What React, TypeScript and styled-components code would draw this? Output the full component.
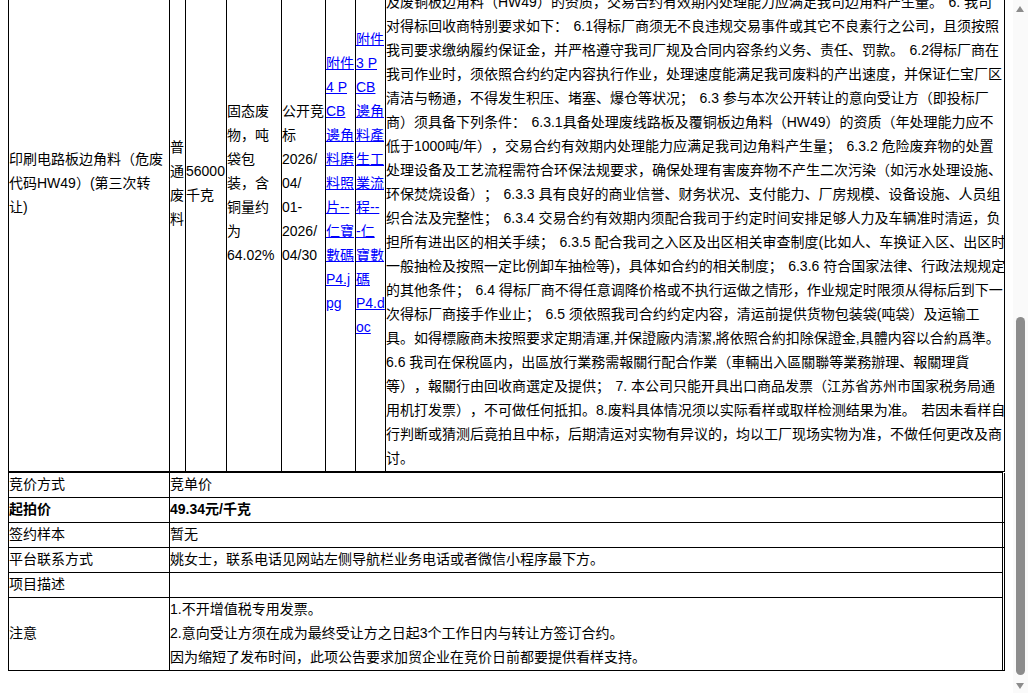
import React from 'react';
import styled, { createGlobalStyle } from 'styled-components';

const GlobalStyle = createGlobalStyle`
  html,
  body {
    margin: 0;
    height: 100%;
    overflow: hidden;
    background: #fff;
  }
  #root {
    height: 100%;
  }
`;

const Page = styled.div`
  display: flex;
  height: 693px;
  font-family: 'Liberation Sans', 'Noto Sans CJK SC', sans-serif;
  font-size: 14px;
  line-height: 24px;
  color: #000;
  text-spacing-trim: space-all;
`;

// page is scrolled to its end, so the content hangs from the bottom and its top is cut off
const Viewport = styled.div`
  flex: 1;
  min-width: 0;
  height: 100%;
  overflow: hidden;
  display: flex;
  flex-direction: column;
  justify-content: flex-end;
  padding: 0 0 22px 8px;
  box-sizing: border-box;
`;

const ItemTable = styled.table`
  flex: none;
  width: 997px;
  table-layout: fixed;
  border-collapse: collapse;
`;

const InfoTable = styled.table`
  flex: none;
  width: 997px;
  table-layout: fixed;
  border-collapse: collapse;
  border-right: 1px solid #000;
`;

const ItemRow = styled.tr`
  height: 578px;
`;

const Cell = styled.td`
  border: 1px solid #000;
  padding: 0;
  vertical-align: middle;
  overflow: hidden;
`;

const DetailCell = styled(Cell)`
  vertical-align: bottom;
  padding-bottom: 1px;
`;

const InfoRow = styled.tr<{ $bold?: boolean }>`
  font-weight: ${({ $bold }) => ($bold ? 700 : 400)};
`;

const InfoCell = styled.td`
  height: 24px;
  border: 1px solid #000;
  padding: 0;
  vertical-align: middle;
`;

const InfoText = styled.div`
  margin: -1px 0 1px;
`;

// sliver of a column at the far right, only some rows rule across it
const EdgeCell = styled.td<{ $ruled?: boolean }>`
  padding: 0;
  border-left: 1px solid #000;
  border-bottom: ${({ $ruled }) => ($ruled ? '1px solid #000' : 'none')};
`;

const Line = styled.div`
  white-space: pre;
`;

// the clause gaps are a little wider than one space
const ClauseGap = styled.span`
  display: inline-block;
  width: 5.5px;
`;

const Attachment = styled.a`
  color: #00f;
  text-decoration: underline;
`;

const Scrollbar = styled.div`
  flex: none;
  width: 15px;
  height: 100%;
  position: relative;
  background: #fafafa;
`;

const Arrow = styled.div<{ $down?: boolean }>`
  position: absolute;
  left: 3px;
  width: 0;
  height: 0;
  border-left: 4.5px solid transparent;
  border-right: 4.5px solid transparent;
  ${({ $down }) =>
    $down ? 'bottom: 4px; border-top: 6px solid #8c8c8c;' : 'top: 6px; border-bottom: 6px solid #8c8c8c;'}
`;

const Thumb = styled.div`
  position: absolute;
  left: 3px;
  top: 317px;
  width: 9px;
  height: 358px;
  border-radius: 5px;
  background: #8c8c8c;
`;

const detailLines = [
  '及废铜板边角料（HW49）的资质，交易合约有效期内处理能力应满足我司边角料产生量。|6. 我司',
  '对得标回收商特别要求如下：|6.1得标厂商须无不良违规交易事件或其它不良素行之公司，且须按照',
  '我司要求缴纳履约保证金，并严格遵守我司厂规及合同内容条约义务、责任、罚款。|6.2得标厂商在',
  '我司作业时，须依照合约约定内容执行作业，处理速度能满足我司废料的产出速度，并保证仁宝厂区',
  '清洁与畅通，不得发生积压、堵塞、爆仓等状况；|6.3 参与本次公开转让的意向受让方（即投标厂',
  '商）须具备下列条件：|6.3.1具备处理废线路板及覆铜板边角料（HW49）的资质（年处理能力应不',
  '低于1000吨/年），交易合约有效期内处理能力应满足我司边角料产生量；|6.3.2 危险废弃物的处置',
  '处理设备及工艺流程需符合环保法规要求，确保处理有害废弃物不产生二次污染（如污水处理设施、',
  '环保焚烧设备）；|6.3.3 具有良好的商业信誉、财务状况、支付能力、厂房规模、设备设施、人员组',
  '织合法及完整性；|6.3.4 交易合约有效期内须配合我司于约定时间安排足够人力及车辆准时清运，负',
  '担所有进出区的相关手续；|6.3.5 配合我司之入区及出区相关审查制度(比如人、车换证入区、出区时',
  '一般抽检及按照一定比例卸车抽检等)，具体如合约的相关制度；|6.3.6 符合国家法律、行政法规规定',
  '的其他条件；|6.4 得标厂商不得任意调降价格或不执行运做之情形，作业规定时限须从得标后到下一',
  '次得标厂商接手作业止；|6.5 须依照我司合约约定内容，清运前提供货物包装袋(吨袋）及运输工',
  '具。如得標廠商未按照要求定期清運,并保證廠内清潔,將依照合約扣除保證金,具體内容以合約爲準。',
  '6.6 我司在保稅區内，出區放行業務需報關行配合作業（車輛出入區關聯等業務辦理、報關理貨',
  '等），報關行由回收商選定及提供；|7. 本公司只能开具出口商品发票（江苏省苏州市国家税务局通',
  '用机打发票），不可做任何抵扣。8.废料具体情况须以实际看样或取样检测结果为准。|若因未看样自',
  '行判断或猜测后竟拍且中标，后期清运对实物有异议的，均以工厂现场实物为准，不做任何更改及商',
  '讨。',
];

const lineBlock = (lines: string[]) => lines.map((text) => <Line key={text}>{text}</Line>);

const detailBlock = (lines: string[]) =>
  lines.map((text) => {
    const [head, tail] = text.split('|');
    return (
      <Line key={text}>
        {head}
        {tail !== undefined && <ClauseGap />}
        {tail}
      </Line>
    );
  });

const App: React.FC = () => (
  <>
    <GlobalStyle />
    <Page>
      <Viewport>
        <ItemTable>
          <colgroup>
            <col style={{ width: 161 }} />
            <col style={{ width: 16 }} />
            <col style={{ width: 41 }} />
            <col style={{ width: 55 }} />
            <col style={{ width: 44 }} />
            <col style={{ width: 30 }} />
            <col style={{ width: 30 }} />
            <col />
          </colgroup>
          <tbody>
            <ItemRow>
              <Cell>{lineBlock(['印刷电路板边角料（危废', '代码HW49）(第三次转', '让)'])}</Cell>
              <Cell>{lineBlock(['普', '通', '废', '料'])}</Cell>
              <Cell>{lineBlock(['56000', '千克'])}</Cell>
              <Cell>{lineBlock(['固态废', '物，吨', '袋包', '装，含', '铜量约', '为', '64.02%'])}</Cell>
              <Cell>{lineBlock(['公开竞', '标', '2026/', '04/', '01-', '2026/', '04/30'])}</Cell>
              <Cell>
                <Attachment href="#">
                  {lineBlock(['附件', '4 P', 'CB', '邊角', '料磨', '料照', '片--', '仁寶', '數碼', 'P4.j', 'pg'])}
                </Attachment>
              </Cell>
              <Cell>
                <Attachment href="#">
                  {lineBlock(['附件', '3 P', 'CB', '邊角', '料產', '生工', '業流', '程--', '-仁', '寶數', '碼', 'P4.d', 'oc'])}
                </Attachment>
              </Cell>
              <DetailCell>{detailBlock(detailLines)}</DetailCell>
            </ItemRow>
          </tbody>
        </ItemTable>
        <InfoTable>
          <colgroup>
            <col style={{ width: 161 }} />
            <col />
            <col style={{ width: 2 }} />
          </colgroup>
          <tbody>
            <InfoRow>
              <InfoCell><InfoText>竞价方式</InfoText></InfoCell>
              <InfoCell><InfoText>竞单价</InfoText></InfoCell>
              <EdgeCell />
            </InfoRow>
            <InfoRow $bold>
              <InfoCell><InfoText>起拍价</InfoText></InfoCell>
              <InfoCell><InfoText>49.34元/千克</InfoText></InfoCell>
              <EdgeCell $ruled />
            </InfoRow>
            <InfoRow>
              <InfoCell><InfoText>签约样本</InfoText></InfoCell>
              <InfoCell><InfoText>暂无</InfoText></InfoCell>
              <EdgeCell $ruled />
            </InfoRow>
            <InfoRow>
              <InfoCell><InfoText>平台联系方式</InfoText></InfoCell>
              <InfoCell><InfoText>姚女士，联系电话见网站左侧导航栏业务电话或者微信小程序最下方。</InfoText></InfoCell>
              <EdgeCell />
            </InfoRow>
            <InfoRow>
              <InfoCell><InfoText>项目描述</InfoText></InfoCell>
              <InfoCell />
              <EdgeCell />
            </InfoRow>
            <InfoRow>
              <InfoCell><InfoText>注意</InfoText></InfoCell>
              <InfoCell>
                <InfoText>
                  {lineBlock([
                    '1.不开增值税专用发票。',
                    '2.意向受让方须在成为最终受让方之日起3个工作日内与转让方签订合约。',
                    '因为缩短了发布时间，此项公告要求加贸企业在竞价日前都要提供看样支持。',
                  ])}
                </InfoText>
              </InfoCell>
              <EdgeCell $ruled />
            </InfoRow>
          </tbody>
        </InfoTable>
      </Viewport>
      <Scrollbar>
        <Arrow />
        <Thumb />
        <Arrow $down />
      </Scrollbar>
    </Page>
  </>
);

export default App;
